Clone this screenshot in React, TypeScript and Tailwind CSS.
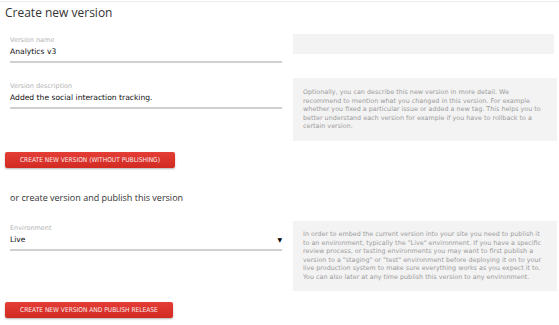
import React from "react";

const body = { fontFamily: '"DejaVu Sans", Verdana, sans-serif' };
const head = { fontFamily: '"Open Sans", "DejaVu Sans", sans-serif' };
const cond = { fontFamily: '"DejaVu Sans Condensed", "DejaVu Sans", sans-serif' };

function Field({ label, value, select }: { label: string; value: string; select?: boolean }) {
  return (
    <div className="w-[272px]" style={body}>
      <div className="text-[6.5px] leading-[8px] text-[#b3b3b3]">{label}</div>
      <div className="flex items-center justify-between h-[12px] mt-[2px]">
        <span className="text-[7.6px] text-[#111]">{value}</span>
        {select && <span className="text-[6px] text-black">▼</span>}
      </div>
      <div className="h-[2px] bg-[#d0d0d0] mt-[3px]" />
    </div>
  );
}

function Help({ children, py }: { children: React.ReactNode; py: string }) {
  return (
    <div
      className={`w-[264px] bg-[#f3f3f3] px-[10px] ${py} text-[6.4px] leading-[8.6px] text-[#9c9c9c]`}
      style={body}
    >
      {children}
    </div>
  );
}

function RedButton({ children, w }: { children: React.ReactNode; w: string }) {
  return (
    <button
      className={`${w} block h-[16px] rounded-[2px] bg-gradient-to-b from-[#e43d35] to-[#d02a23] text-[#fbeaea] text-[6.6px] leading-[16px] shadow-[0_1px_2px_rgba(0,0,0,0.3)]`}
      style={cond}
    >
      {children}
    </button>
  );
}

export default function App() {
  return (
    <div className="w-[559px] h-[325px] bg-white border-t border-[#ececec] mt-[1px] overflow-hidden px-[5px]">
      <h1 className="text-[12px] leading-[16px] text-[#333] mt-[3px]" style={head}>
        Create new version
      </h1>

      <div className="flex mt-[13px] items-start">
        <div className="ml-[5px] pt-[2px]">
          <Field label="Version name" value="Analytics v3" />
        </div>
        <div className="ml-[11px] w-[264px] h-[20px] bg-[#f3f3f3]" />
      </div>

      <div className="flex mt-[15px] items-start">
        <div className="ml-[5px] pt-[4px]">
          <Field label="Version description" value="Added the social interaction tracking." />
        </div>
        <div className="ml-[11px]">
          <Help py="py-[10px]">
            Optionally, you can describe this new version in more detail. We recommend to mention what you
            changed in this version. For example whether you fixed a particular issue or added a new tag. This
            helps you to better understand each version for example if you have to rollback to a certain
            version.
          </Help>
        </div>
      </div>

      <div className="mt-[11px]">
        <RedButton w="w-[170px]">CREATE NEW VERSION (WITHOUT PUBLISHING)</RedButton>
      </div>

      <p className="ml-[5px] mt-[24px] text-[9px] leading-[12px] text-[#333]" style={head}>
        or create version and publish this version
      </p>

      <div className="flex mt-[17px] items-start">
        <div className="ml-[5px] pt-[3px]">
          <Field label="Environment" value="Live" select />
        </div>
        <div className="ml-[11px]">
          <Help py="py-[9px]">
            In order to embed the current version into your site you need to publish it to an environment,
            typically the "Live" environment. If you have a specific review process, or testing environments
            you may want to first publish a version to a "staging" or "test" environment before deploying it
            on to your live production system to make sure everything works as you expect it to. You can also
            later at any time publish this version to any environment.
          </Help>
        </div>
      </div>

      <div className="mt-[11px]">
        <RedButton w="w-[168px]">CREATE NEW VERSION AND PUBLISH RELEASE</RedButton>
      </div>
    </div>
  );
}
